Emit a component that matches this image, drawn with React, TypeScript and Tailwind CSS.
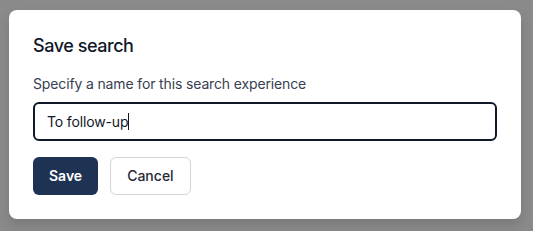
import React from 'react';

const App: React.FC = () => {
  return (
    <div className="min-h-[231px] w-[533px] bg-[#8a8a8a] pt-[10px] pl-[9px] font-['Inter',sans-serif]">
      <div className="w-[512px] rounded-lg bg-white p-6 shadow-[0_6px_12px_rgba(0,0,0,0.12)]">
        {/* Title */}
        <h2 className="text-lg leading-6 font-medium tracking-tight text-[#111827]">Save search</h2>

        {/* Name field */}
        <label className="mt-4 block text-sm leading-5 tracking-[-0.01em] text-[#374151]">
          Specify a name for this search experience
        </label>
        <div className="mt-2 flex h-[39px] items-center rounded-md border-2 border-[#111827] px-3 text-sm tracking-[-0.01em] text-[#111827]">
          <span>To follow-up</span>
          <span className="h-[17px] w-px bg-[#111827]" />
        </div>

        {/* Actions */}
        <div className="mt-4 flex gap-3">
          <button className="h-[38px] rounded-md bg-[#1e3354] px-4 text-sm font-semibold text-white">
            Save
          </button>
          <button className="h-[38px] rounded-md border border-[#d1d5db] bg-white px-4 text-sm font-medium text-[#1f2937]">
            Cancel
          </button>
        </div>
      </div>
    </div>
  );
};

export default App;
